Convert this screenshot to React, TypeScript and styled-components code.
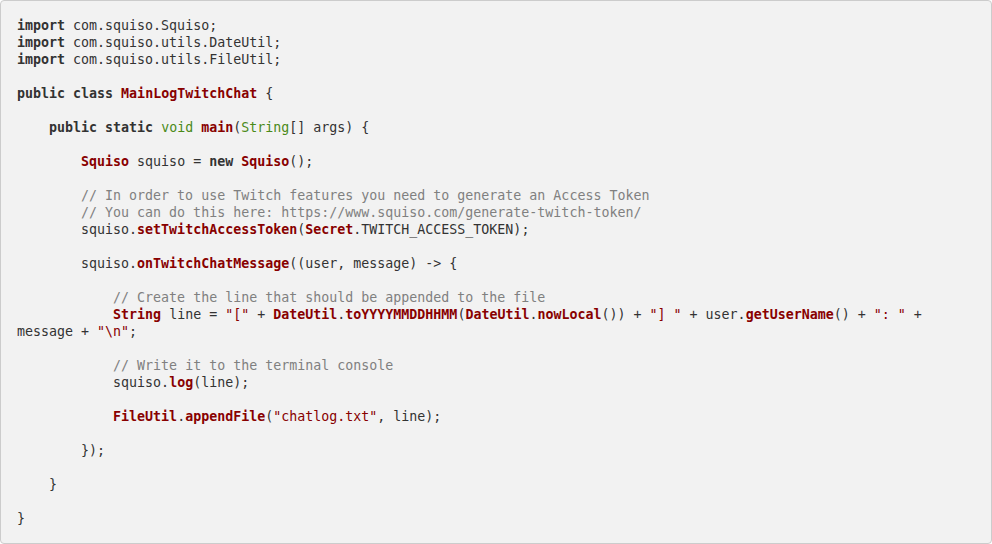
import React from "react";
import styled, { createGlobalStyle } from "styled-components";

const Global = createGlobalStyle`
  html, body { margin: 0; padding: 0; background: #ffffff; }
`;

const CodeBox = styled.pre`
  box-sizing: border-box;
  width: 992px;
  height: 544px;
  margin: 0;
  padding: 16px;
  background: #f2f2f2;
  border: 1px solid #cccccc;
  border-radius: 4px;
  font-family: "DejaVu Sans Mono", "Liberation Mono", monospace;
  font-size: 13.3px;
  line-height: 17px;
  color: #333333;
  white-space: pre-wrap;
  word-break: normal;
  overflow: hidden;
`;

type Kind = "t" | "k" | "r" | "s" | "c" | "g";

const Tok = styled.span<{ $kind: Kind }>`
  color: ${(p) =>
    p.$kind === "r" || p.$kind === "s"
      ? "#880000"
      : p.$kind === "c"
      ? "#808080"
      : p.$kind === "g"
      ? "#4a8a18"
      : "#333333"};
  font-weight: ${(p) => (p.$kind === "k" || p.$kind === "r" ? "bold" : "normal")};
`;

type Line = Array<[Kind, string]>;

const lines: Line[] = [
  [["k", "import"], ["t", " com.squiso.Squiso;"]],
  [["k", "import"], ["t", " com.squiso.utils.DateUtil;"]],
  [["k", "import"], ["t", " com.squiso.utils.FileUtil;"]],
  [],
  [["k", "public"], ["t", " "], ["k", "class"], ["t", " "], ["r", "MainLogTwitchChat"], ["t", " {"]],
  [],
  [
    ["t", "    "],
    ["k", "public"],
    ["t", " "],
    ["k", "static"],
    ["t", " "],
    ["g", "void"],
    ["t", " "],
    ["r", "main"],
    ["t", "("],
    ["g", "String"],
    ["t", "[] args) {"],
  ],
  [],
  [["t", "        "], ["r", "Squiso"], ["t", " squiso = "], ["k", "new"], ["t", " "], ["r", "Squiso"], ["t", "();"]],
  [],
  [["t", "        "], ["c", "// In order to use Twitch features you need to generate an Access Token"]],
  [["t", "        "], ["c", "// You can do this here: https://www.squiso.com/generate-twitch-token/"]],
  [
    ["t", "        squiso."],
    ["r", "setTwitchAccessToken"],
    ["t", "("],
    ["r", "Secret"],
    ["t", ".TWITCH_ACCESS_TOKEN);"],
  ],
  [],
  [["t", "        squiso."], ["r", "onTwitchChatMessage"], ["t", "((user, message) -> {"]],
  [],
  [["t", "            "], ["c", "// Create the line that should be appended to the file"]],
  [
    ["t", "            "],
    ["r", "String"],
    ["t", " line = "],
    ["s", "\"[\""],
    ["t", " + "],
    ["r", "DateUtil"],
    ["t", "."],
    ["r", "toYYYYMMDDHHMM"],
    ["t", "("],
    ["r", "DateUtil"],
    ["t", "."],
    ["r", "nowLocal"],
    ["t", "()) + "],
    ["s", "\"] \""],
    ["t", " + user."],
    ["r", "getUserName"],
    ["t", "() + "],
    ["s", "\": \""],
    ["t", " + "],
    ["t", "message + "],
    ["s", "\"\\n\""],
    ["t", ";"],
  ],
  [],
  [["t", "            "], ["c", "// Write it to the terminal console"]],
  [["t", "            squiso."], ["r", "log"], ["t", "(line);"]],
  [],
  [
    ["t", "            "],
    ["r", "FileUtil"],
    ["t", "."],
    ["r", "appendFile"],
    ["t", "("],
    ["s", "\"chatlog.txt\""],
    ["t", ", line);"],
  ],
  [],
  [["t", "        });"]],
  [],
  [["t", "    }"]],
  [],
  [["t", "}"]],
];

export default function App() {
  return (
    <>
      <Global />
      <CodeBox>
        {lines.map((line, i) => (
          <React.Fragment key={i}>
            {line.map(([kind, text], j) => (
              <Tok key={j} $kind={kind}>
                {text}
              </Tok>
            ))}
            {i < lines.length - 1 ? "\n" : ""}
          </React.Fragment>
        ))}
      </CodeBox>
    </>
  );
}
